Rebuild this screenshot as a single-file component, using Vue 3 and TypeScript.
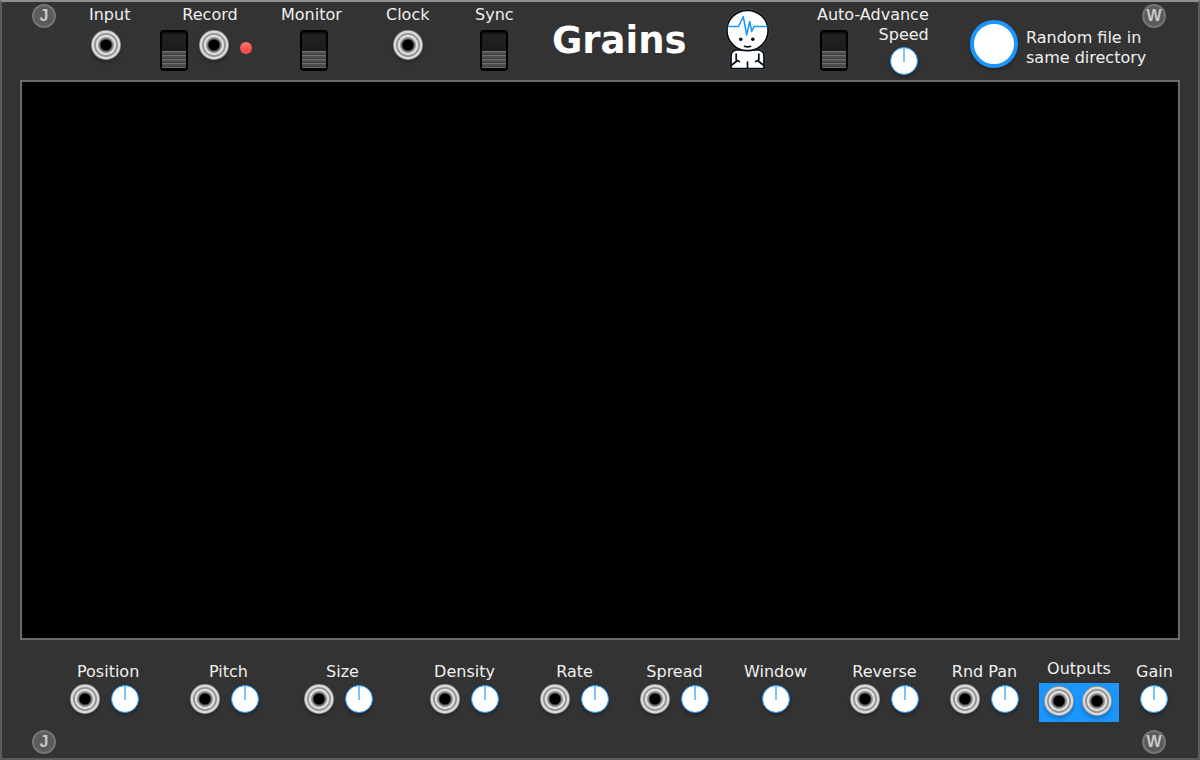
<script setup lang="ts">
import { ref } from 'vue'

interface Param {
  id: string
  label: string
  jack: boolean
  lean?: boolean
}

const params: Param[] = [
  { id: 'position', label: 'Position', jack: true, lean: true },
  { id: 'pitch', label: 'Pitch', jack: true, lean: true },
  { id: 'size', label: 'Size', jack: true, lean: true },
  { id: 'density', label: 'Density', jack: true },
  { id: 'rate', label: 'Rate', jack: true },
  { id: 'spread', label: 'Spread', jack: true },
  { id: 'window', label: 'Window', jack: false },
  { id: 'reverse', label: 'Reverse', jack: true },
  { id: 'rnd-pan', label: 'Rnd Pan', jack: true },
]

const record = ref(false)
const monitor = ref(false)
const sync = ref(false)
const autoAdvance = ref(false)
</script>

<template>
  <main class="panel">
    <svg class="defs" aria-hidden="true">
      <symbol id="jack" viewBox="0 0 30 30">
        <circle cx="15" cy="15" r="15" fill="#8c8c8c" />
        <circle cx="15" cy="15" r="13" fill="none" stroke="#dadada" stroke-width="2.4" />
        <circle cx="15" cy="15" r="11" fill="none" stroke="#959595" stroke-width="1.6" />
        <circle cx="15" cy="15" r="9" fill="none" stroke="#e0e0e0" stroke-width="2.4" />
        <circle cx="15" cy="15" r="7.8" fill="#929292" />
        <circle cx="15" cy="15" r="6.6" fill="#555" />
        <circle cx="15" cy="15" r="5.6" fill="#000" />
      </symbol>
    </svg>

    <header class="top">
      <span class="badge">J</span>

      <section class="group lean">
        <label class="caption" for="jack-input">Input</label>
        <button id="jack-input" class="jack" type="button"><svg><use href="#jack" /></svg></button>
      </section>

      <section class="group lean">
        <label class="caption" for="sw-record">Record</label>
        <div class="controls">
          <input id="sw-record" v-model="record" class="switch" type="checkbox" />
          <button class="jack" type="button" aria-label="Record gate"><svg><use href="#jack" /></svg></button>
          <span class="led"></span>
        </div>
      </section>

      <section class="group">
        <label class="caption" for="sw-monitor">Monitor</label>
        <input id="sw-monitor" v-model="monitor" class="switch switch-monitor" type="checkbox" />
      </section>

      <section class="group">
        <label class="caption" for="jack-clock">Clock</label>
        <button id="jack-clock" class="jack" type="button"><svg><use href="#jack" /></svg></button>
      </section>

      <section class="group">
        <label class="caption" for="sw-sync">Sync</label>
        <input id="sw-sync" v-model="sync" class="switch" type="checkbox" />
      </section>

      <h1 class="title">Grains</h1>

      <svg class="mascot" viewBox="0 0 46 62" aria-hidden="true">
        <g stroke="#46525c" stroke-width="3" fill="#46525c">
          <ellipse cx="22.5" cy="21.5" rx="20.6" ry="20.2" />
          <path d="M6 59.5V47q0-5 5-6h23q5 1 5 6v12.5z" />
        </g>
        <g stroke="#070d14" stroke-width="1.7" stroke-linejoin="round" stroke-linecap="round" fill="#fff">
          <path d="M6 59.5V47q0-5 5-6h23q5 1 5 6v12.5z" />
          <path d="M11.2 45v6l3 1.5M11.2 52.5l-4.5 3.5M33.8 45v6l-3 1.5M33.8 52.5l4.5 3.5M22.5 53v6" fill="none" />
          <ellipse cx="22.5" cy="21.5" rx="20.6" ry="20.2" />
          <path d="M19.5 37.3q3.3 1.2 6 0" fill="none" />
        </g>
        <circle cx="15.8" cy="30.3" r="1.8" fill="#070d14" />
        <circle cx="27.8" cy="30.3" r="1.8" fill="#070d14" />
        <path d="M2.5 17.5H13.5L18.3 7.5L21.7 26L24.7 12.5L26.7 22.5L29 17.5H42.5" fill="none" stroke="#1b95ff" stroke-width="1.5" stroke-linejoin="round" />
      </svg>

      <section class="auto">
        <label class="caption" for="sw-auto">Auto-Advance</label>
        <div class="auto-row">
          <input id="sw-auto" v-model="autoAdvance" class="switch" type="checkbox" />
          <div class="speed">
            <label class="caption" for="knob-speed">Speed</label>
            <input id="knob-speed" class="knob" type="range" />
          </div>
        </div>
      </section>

      <div class="random">
        <button id="random" class="random-button" type="button"></button>
        <label for="random">Random file in<br />same directory</label>
      </div>

      <span class="badge">W</span>
    </header>

    <section class="screen" aria-label="Waveform"></section>

    <footer class="bottom">
      <div class="params">
        <section v-for="p in params" :key="p.id" class="group" :class="{ lean: p.lean }">
          <label class="caption" :for="'knob-' + p.id">{{ p.label }}</label>
          <div class="controls">
            <button v-if="p.jack" class="jack" type="button" :aria-label="p.label + ' CV'"><svg><use href="#jack" /></svg></button>
            <input :id="'knob-' + p.id" class="knob" type="range" />
          </div>
        </section>

        <section class="group outputs">
          <label class="caption" for="out-left">Outputs</label>
          <div class="output-box">
            <button id="out-left" class="jack" type="button"><svg><use href="#jack" /></svg></button>
            <button class="jack" type="button" aria-label="Right output"><svg><use href="#jack" /></svg></button>
          </div>
        </section>

        <section class="group">
          <label class="caption" for="knob-gain">Gain</label>
          <input id="knob-gain" class="knob" type="range" />
        </section>
      </div>
      <div class="badges">
        <span class="badge">J</span>
        <span class="badge">W</span>
      </div>
    </footer>
  </main>
</template>

<style>
body {
  margin: 0;
  background: #333;
}
</style>

<style scoped>
.panel {
  box-sizing: border-box;
  min-height: 100vh;
  display: flex;
  flex-direction: column;
  border: 2px solid #5b5b5b;
  border-top-color: #8e8e8e;
  background: #333;
  color: #f0f0f0;
  font: 16px/20px "DejaVu Sans", sans-serif;
}

.defs {
  position: absolute;
  width: 0;
  height: 0;
}

.top {
  display: grid;
  grid-template-columns:
    minmax(0, 49fr) minmax(0, 79fr) minmax(0, 121fr) minmax(0, 105fr)
    minmax(0, 89fr) minmax(0, 77fr) minmax(0, 173fr) minmax(0, 92fr)
    minmax(0, 153fr) minmax(0, 172fr) 24px;
  align-items: start;
  justify-items: start;
  min-height: 78px;
  box-sizing: border-box;
  padding: 2px 32px 0 30px;
}

.group {
  display: flex;
  flex-direction: column;
  align-items: center;
  gap: 5px;
  padding-top: 1px;
}

.caption {
  white-space: nowrap;
}

.lean .caption {
  padding-left: 8px;
}

.controls {
  display: flex;
  align-items: flex-start;
  gap: 11px;
}

.badge {
  display: block;
  box-sizing: border-box;
  width: 24px;
  height: 24px;
  border: 2px solid #757575;
  border-radius: 50%;
  background: #5b5b5b;
  color: #c8c8c8;
  font: bold 16px/20px "Liberation Sans", sans-serif;
  text-align: center;
}

.jack {
  flex: none;
  width: 30px;
  height: 30px;
  padding: 0;
  border: 0;
  border-radius: 50%;
  background: none;
  box-shadow: 0 3px 3px rgba(0, 0, 0, 0.2);
}

.jack svg {
  display: block;
  width: 30px;
  height: 30px;
}

.switch {
  appearance: none;
  flex: none;
  box-sizing: border-box;
  width: 28px;
  height: 41px;
  margin: 0;
  border: 2px solid #000;
  border-radius: 4px;
  background:
    repeating-linear-gradient(#707070 0 1px, #505050 1px 3px, #3c3c3c 3px 4px) 0 19px / 100% 17px no-repeat,
    linear-gradient(#0c0c0c, #222 3px, #1a1a1a 19px, #000 19px);
}

.switch-monitor {
  margin-left: 5px;
}

.led {
  width: 12px;
  height: 12px;
  margin-top: 12px;
  border-radius: 50%;
  background: linear-gradient(#ff7a74, #f25049 60%);
}

.knob {
  appearance: none;
  flex: none;
  box-sizing: border-box;
  width: 28px;
  height: 28px;
  margin: 1px 0;
  border: 1px solid #1b95ff;
  border-radius: 50%;
  background: linear-gradient(#7cc2ff, #7cc2ff) 12px 0 / 2px 14px no-repeat #fff;
  box-shadow: 0 3px 3px rgba(0, 0, 0, 0.2);
}

.knob::-webkit-slider-thumb {
  appearance: none;
  width: 1px;
  height: 1px;
}

.title {
  margin: 15px 0 0;
  color: #fff;
  font: bold 37px/44px "DejaVu Sans", sans-serif;
}

.mascot {
  width: 46px;
  height: 62px;
  margin-top: 5px;
}

.auto {
  display: flex;
  flex-direction: column;
  padding-top: 1px;
}

.auto-row {
  display: flex;
  justify-content: space-between;
  padding-left: 3px;
}

.auto-row .switch {
  margin-top: 5px;
}

.speed {
  display: flex;
  flex-direction: column;
  align-items: center;
  gap: 1px;
}

.random {
  display: flex;
  align-items: flex-end;
  gap: 8px;
  margin-top: 16px;
  white-space: nowrap;
}

.random-button {
  flex: none;
  width: 48px;
  height: 48px;
  padding: 0;
  border: 4px solid #1b95ff;
  border-radius: 50%;
  background: #fff;
  box-shadow: 0 3px 3px rgba(0, 0, 0, 0.2);
}

.screen {
  flex: 1;
  margin: 0 18px;
  border: 2px solid #6b6b6b;
  background: #000;
}

.bottom {
  padding: 18px 32px 4px 30px;
}

.params {
  display: grid;
  grid-template-columns:
    minmax(0, 121fr) minmax(0, 114fr) minmax(0, 126fr) minmax(0, 110fr)
    minmax(0, 100fr) minmax(0, 104fr) minmax(0, 106fr) minmax(0, 100fr)
    minmax(0, 89fr) minmax(0, 97fr) 30px;
  align-items: start;
  justify-items: start;
  padding-left: 37px;
}

.params .group {
  padding-top: 4px;
  gap: 2px;
}

.params .outputs {
  padding-top: 1px;
  gap: 4px;
}

.output-box {
  display: flex;
  gap: 8px;
  padding: 3px 7px 6px 5px;
  background: #1b95ff;
}

.badges {
  display: flex;
  justify-content: space-between;
  margin-top: 8px;
}
</style>
